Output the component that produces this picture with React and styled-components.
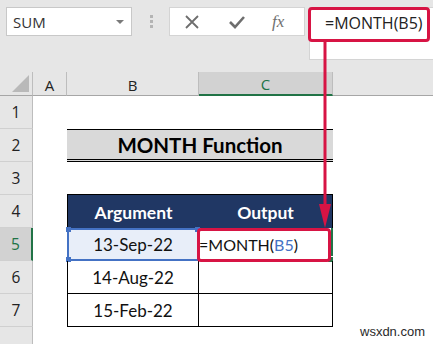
import React from "react";
import styled, { createGlobalStyle } from "styled-components";

const GlobalStyle = createGlobalStyle`
  html, body {
    margin: 0;
    padding: 0;
    background: #ffffff;
  }
  body {
    font-family: "Open Sans", "Liberation Sans", sans-serif;
  }
`;

const Page = styled.div`
  position: relative;
  width: 433px;
  height: 344px;
  overflow: hidden;
  background: #ffffff;
`;

const TopBar = styled.div`
  display: flex;
  align-items: flex-start;
  height: 72px;
  padding: 7px 0 0 6px;
  box-sizing: border-box;
  background: #e6e6e6;
`;

const NameBox = styled.div`
  display: flex;
  flex: none;
  align-items: center;
  justify-content: space-between;
  width: 126px;
  height: 29px;
  box-sizing: border-box;
  padding: 0 7px 0 6px;
  background: #ffffff;
  border: 1px solid #c8c8c8;
  font-size: 15px;
  color: #333333;
`;

const Caret = styled.span`
  width: 0;
  height: 0;
  border-left: 4px solid transparent;
  border-right: 4px solid transparent;
  border-top: 4px solid #7a7a7a;
`;

const Grip = styled.div`
  display: flex;
  flex: none;
  flex-direction: column;
  gap: 2px;
  margin: 8px 16px 0 18px;
  span {
    width: 3px;
    height: 3px;
    background: #b4b4b4;
  }
`;

const Tools = styled.div`
  display: flex;
  flex: none;
  align-items: center;
  width: 136px;
  height: 29px;
  box-sizing: border-box;
  padding-left: 14px;
  gap: 28px;
  background: #ffffff;
  border: 1px solid #d4d4d4;
`;

const Fx = styled.span`
  font-family: "Liberation Serif", serif;
  font-style: italic;
  font-size: 17px;
  color: #707070;
  margin-left: -2px;
`;

const FormulaInput = styled.div`
  flex: 1;
  height: 53px;
  margin-left: 4px;
  background: #ffffff;
  border: 1px solid #d4d4d4;
  border-right: none;
  box-sizing: border-box;
`;

const FormulaText = styled.div`
  padding: 4px 0 0 15px;
  font-size: 16px;
  color: #222222;
  white-space: nowrap;
`;

const RedBox = styled.div`
  position: absolute;
  left: ${p => p.$l}px;
  top: ${p => p.$t}px;
  width: ${p => p.$w}px;
  height: ${p => p.$h}px;
  box-sizing: border-box;
  border: 3px solid #d71444;
  border-radius: 4px;
  pointer-events: none;
`;

const Row = styled.div`
  display: grid;
  grid-template-columns: 33px 34px 132px 134px 1fr;
  height: ${p => p.$h || 33}px;
`;

const Corner = styled.div`
  position: relative;
  background: #e6e6e6;
  border-right: 1px solid #bdbdbd;
  border-bottom: 1px solid #a6a6a6;
  &::after {
    content: "";
    position: absolute;
    right: 3px;
    bottom: 3px;
    border-left: 17px solid transparent;
    border-bottom: 17px solid #b9b9b9;
  }
`;

const ColHead = styled.div`
  display: flex;
  align-items: center;
  justify-content: center;
  background: ${p => (p.$active ? "#d2d2d2" : "#e6e6e6")};
  border-right: 1px solid #bdbdbd;
  border-bottom: ${p => (p.$active ? "2px solid #217346" : "1px solid #a6a6a6")};
  color: ${p => (p.$active ? "#217346" : "#222222")};
  font-size: 15px;
  padding-top: 2px;
  box-sizing: border-box;
`;

const HeadFill = styled.div`
  background: #e6e6e6;
  border-bottom: 1px solid #a6a6a6;
`;

const RowHead = styled.div`
  display: flex;
  align-items: center;
  justify-content: center;
  background: ${p => (p.$active ? "#d2d2d2" : "#e6e6e6")};
  border-right: ${p => (p.$active ? "2px solid #217346" : "1px solid #bdbdbd")};
  border-bottom: 1px solid #d0d0d0;
  color: ${p => (p.$active ? "#217346" : "#222222")};
  font-size: 15.5px;
  box-sizing: border-box;
`;

const Cell = styled.div`
  position: relative;
  display: flex;
  align-items: center;
  justify-content: center;
  font-family: "Lato", "Open Sans", sans-serif;
  font-size: 17px;
  color: #111111;
  box-sizing: border-box;
  border-left: ${p => (p.$bl ? "1px solid #000" : "none")};
  border-right: ${p => (p.$br ? "1px solid #000" : "none")};
  border-bottom: ${p => (p.$bb ? "1px solid #000" : "none")};
`;

const TitleCell = styled.div`
  grid-column: 3 / span 2;
  display: flex;
  align-items: center;
  justify-content: center;
  background: #d9d9d9;
  border-top: 1px solid #000;
  border-bottom: 3px double #000;
  box-sizing: border-box;
  font-family: "Lato", "Open Sans", sans-serif;
  font-weight: 700;
  font-size: 20.5px;
  color: #000000;
`;

const HeadCell = styled(Cell)`
  background: #203764;
  color: #ffffff;
  font-weight: 700;
  font-size: 17.5px;
  padding-top: 2px;
`;

const RefCell = styled(Cell)`
  background: #e8eef9;
  border: 2px solid #4472c4;
  span {
    position: absolute;
    width: 5px;
    height: 5px;
    background: #4472c4;
  }
`;

const ActiveCell = styled(Cell)`
  justify-content: flex-start;
  font-size: 16px;
  border-right: 2px solid #217346;
  &::after {
    content: "";
    position: absolute;
    right: -3px;
    bottom: -3px;
    width: 5px;
    height: 5px;
    background: #217346;
    border: 1px solid #fff;
  }
`;

const Ref = styled.span`
  color: #4472c4;
`;

const Arrow = styled.svg`
  position: absolute;
  left: 316px;
  top: 40px;
  pointer-events: none;
`;

const Watermark = styled.div`
  position: absolute;
  left: 360px;
  top: 324px;
  font-family: "Liberation Sans", Arial, sans-serif;
  font-size: 13px;
  color: #2a2a2a;
`;

const SheetRow = ({ n, active, children }) => (
  <Row>
    <RowHead $active={active}>{n}</RowHead>
    {children}
  </Row>
);

export default function App() {
  return (
    <Page>
      <GlobalStyle />
      <TopBar>
        <NameBox>
          SUM
          <Caret />
        </NameBox>
        <Grip>
          <span />
          <span />
          <span />
        </Grip>
        <Tools>
          <svg width="16" height="16" viewBox="0 0 16 16">
            <path d="M2 2 L14 14 M14 2 L2 14" stroke="#6e6e6e" strokeWidth="1.8" fill="none" />
          </svg>
          <svg width="18" height="16" viewBox="0 0 18 16">
            <path d="M2 8 L7 13 L16 3" stroke="#6e6e6e" strokeWidth="2.6" fill="none" />
          </svg>
          <Fx>fx</Fx>
        </Tools>
        <FormulaInput>
          <FormulaText>=MONTH(B5)</FormulaText>
        </FormulaInput>
      </TopBar>
      <RedBox $l={308} $t={7} $w={122} $h={35} />

      <Row $h={24}>
        <Corner />
        <ColHead>A</ColHead>
        <ColHead>B</ColHead>
        <ColHead $active>C</ColHead>
        <HeadFill />
      </Row>

      <SheetRow n={1}>
        <Cell />
        <Cell />
        <Cell />
        <Cell />
      </SheetRow>
      <SheetRow n={2}>
        <Cell />
        <TitleCell>MONTH Function</TitleCell>
        <Cell />
      </SheetRow>
      <SheetRow n={3}>
        <Cell />
        <Cell $bb />
        <Cell $bb />
        <Cell />
      </SheetRow>
      <SheetRow n={4}>
        <Cell />
        <HeadCell $bl>Argument</HeadCell>
        <HeadCell $br>Output</HeadCell>
        <Cell />
      </SheetRow>
      <SheetRow n={5} active>
        <Cell />
        <RefCell>
          13-Sep-22
          <span style={{ left: -3, top: -3 }} />
          <span style={{ left: -3, bottom: -3 }} />
          <span style={{ right: -3, top: -3 }} />
        </RefCell>
        <ActiveCell $bb>
          =MONTH(<Ref>B5</Ref>)
        </ActiveCell>
        <Cell />
      </SheetRow>
      <SheetRow n={6}>
        <Cell />
        <Cell $bl $br $bb>14-Aug-22</Cell>
        <Cell $br $bb />
        <Cell />
      </SheetRow>
      <SheetRow n={7}>
        <Cell />
        <Cell $bl $br $bb>15-Feb-22</Cell>
        <Cell $br $bb />
        <Cell />
      </SheetRow>
      <SheetRow>
        <Cell />
        <Cell />
        <Cell />
        <Cell />
      </SheetRow>

      <RedBox $l={197} $t={228} $w={134} $h={34} />
      <Arrow width="20" height="190" viewBox="0 0 20 190">
        <line x1="9" y1="0" x2="9" y2="170" stroke="#d71444" strokeWidth="3" />
        <path d="M3 164 L15 164 L9 188 Z" fill="#d71444" />
      </Arrow>
      <Watermark>wsxdn.com</Watermark>
    </Page>
  );
}
